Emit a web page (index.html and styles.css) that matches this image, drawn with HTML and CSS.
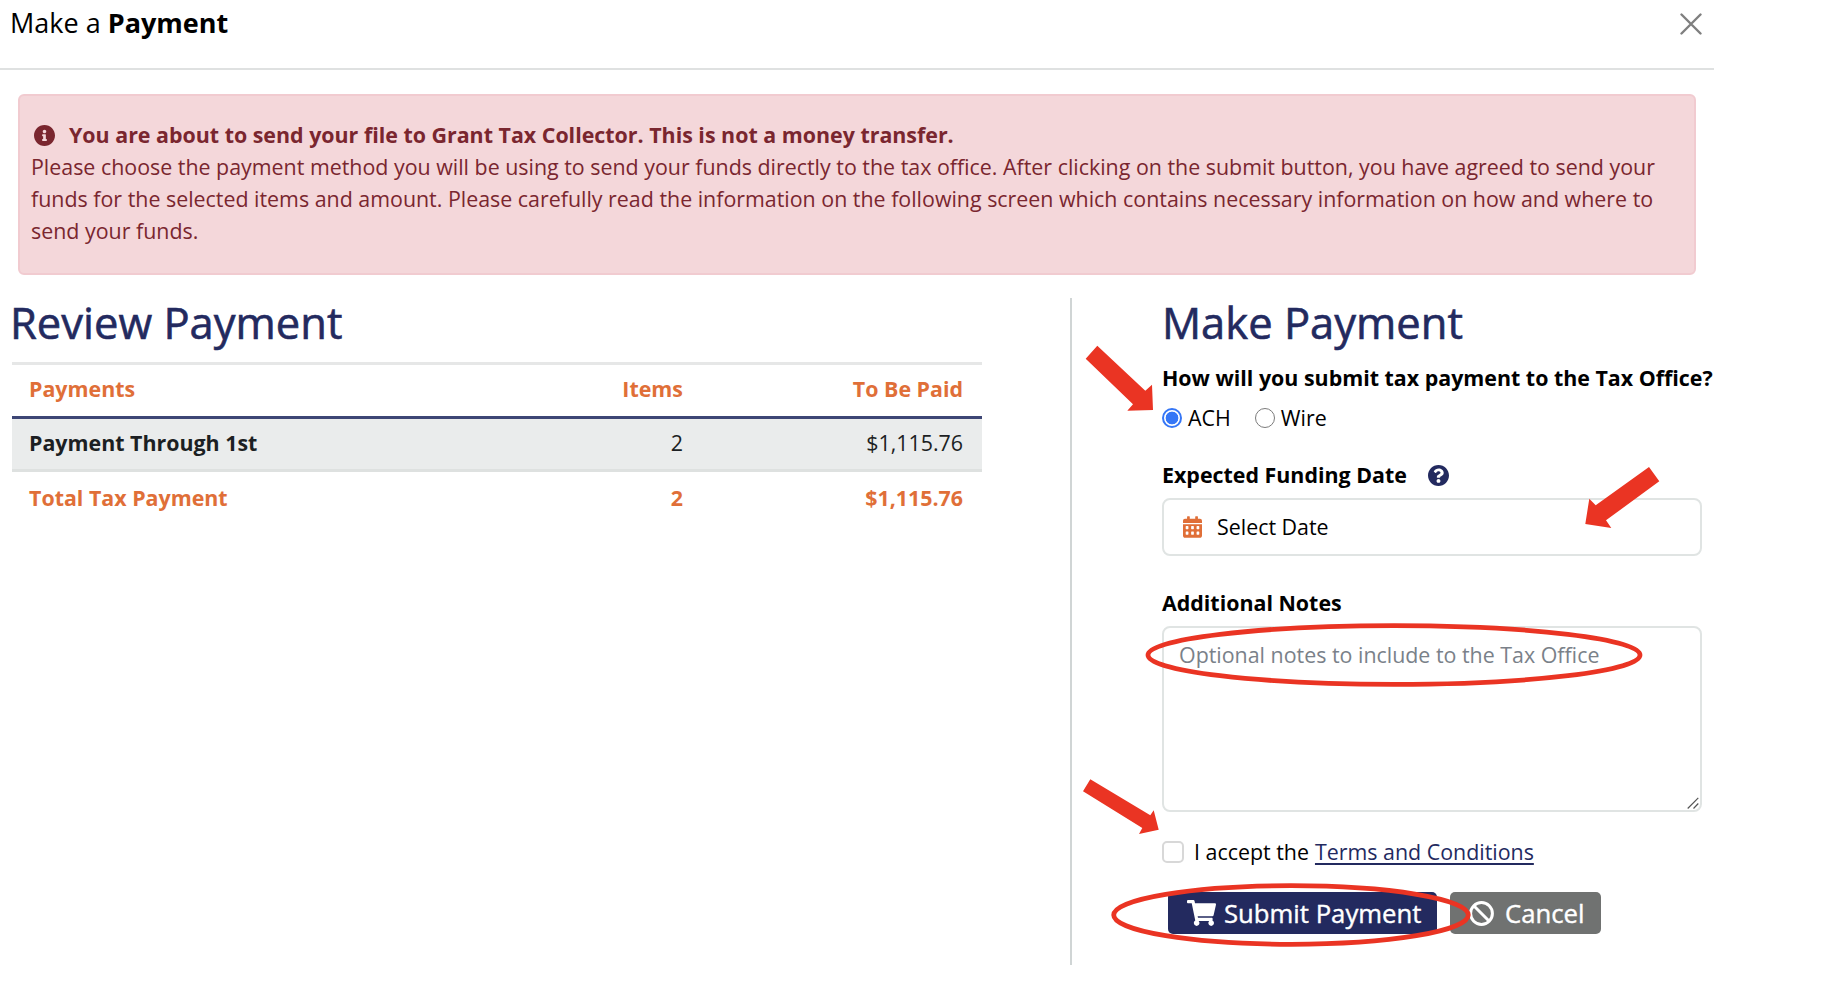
FILE: index.html
```
<!DOCTYPE html>
<html lang="en">
<head>
  <meta charset="UTF-8" />
  <meta name="viewport" content="width=device-width, initial-scale=1.0"/>
  <title>Make a Payment</title>
  <link rel="stylesheet" href="styles.css">
</head>
<body>
  <div class="modal">
    <header class="modal-header">
      <h5 class="modal-title"><span>Make a</span> <b>Payment</b></h5>
      <button class="close" type="button" aria-label="Close">
        <svg viewBox="0 0 22 22"><path d="M1.5 1.5l19 19M20.5 1.5l-19 19"/></svg>
      </button>
    </header>

    <div class="alert">
      <div class="alert-title">
        <svg class="icon" viewBox="8 8 496 496"><path d="M256 8C119.043 8 8 119.083 8 256c0 136.997 111.043 248 248 248s248-111.003 248-248C504 119.083 392.957 8 256 8zm0 110c23.196 0 42 18.804 42 42s-18.804 42-42 42-42-18.804-42-42 18.804-42 42-42zm56 254c0 6.627-5.373 12-12 12h-88c-6.627 0-12-5.373-12-12v-24c0-6.627 5.373-12 12-12h12v-64h-12c-6.627 0-12-5.373-12-12v-24c0-6.627 5.373-12 12-12h64c6.627 0 12 5.373 12 12v100h12c6.627 0 12 5.373 12 12v24z"/></svg>
        <b>You are about to send your file to Grant Tax Collector. This is not a money transfer.</b>
      </div>
      <p>Please choose the payment method you will be using to send your funds directly to the tax office. After clicking on the submit button, you have agreed to send your<br>
      funds for the selected items and amount. Please carefully read the information on the following screen which contains necessary information on how and where to<br>
      send your funds.</p>
    </div>

    <div class="row">
      <section class="review">
        <h2>Review Payment</h2>
        <table>
          <thead>
            <tr><th class="name">Payments</th><th class="items">Items</th><th>To Be Paid</th></tr>
          </thead>
          <tbody>
            <tr><th class="name">Payment Through 1st</th><td>2</td><td>$1,115.76</td></tr>
          </tbody>
          <tfoot>
            <tr><th class="name">Total Tax Payment</th><th>2</th><th>$1,115.76</th></tr>
          </tfoot>
        </table>
      </section>

      <section class="payment">
        <h2>Make Payment</h2>
        <form>
          <div class="label question">How will you submit tax payment to the Tax Office?</div>
          <div class="radios">
            <label><input type="radio" name="method" checked><span class="ach">ACH</span></label>
            <label><input type="radio" name="method"><span>Wire</span></label>
          </div>

          <div class="label date-label"><span>Expected Funding Date</span>
            <svg class="icon" viewBox="8 8 496 496"><path d="M504 256c0 136.997-111.043 248-248 248S8 392.997 8 256C8 119.083 119.043 8 256 8s248 111.083 248 248zM262.655 90c-54.497 0-89.255 22.957-116.549 63.758-3.536 5.286-2.353 12.415 2.715 16.258l34.699 26.31c5.205 3.947 12.621 3.008 16.665-2.122 17.864-22.658 30.113-35.797 57.303-35.797 20.429 0 45.698 13.148 45.698 32.958 0 14.976-12.363 22.667-32.534 33.976C247.128 238.528 216 254.941 216 296v4c0 6.627 5.373 12 12 12h56c6.627 0 12-5.373 12-12v-1.333c0-28.462 83.186-29.647 83.186-106.667 0-58.002-60.165-102-116.531-102zM256 338c-25.365 0-46 20.635-46 46 0 25.364 20.635 46 46 46s46-20.636 46-46c0-25.365-20.635-46-46-46z"/></svg>
          </div>
          <div class="date-input">
            <svg viewBox="0 0 448 512"><path fill-rule="evenodd" d="M0 192h448v272c0 26.500-21.500 48-48 48H48c-26.500 0-48-21.500-48-48zM64 244v52c0 6 5 12 12 12h40c7 0 12-6 12-12v-52c0-6-5-12-12-12H76c-7 0-12 6-12 12zM192 244v52c0 6 5 12 12 12h40c7 0 12-6 12-12v-52c0-6-5-12-12-12h-40c-7 0-12 6-12 12zM320 244v52c0 6 5 12 12 12h40c7 0 12-6 12-12v-52c0-6-5-12-12-12h-40c-7 0-12 6-12 12zM64 376v52c0 6 5 12 12 12h40c7 0 12-6 12-12v-52c0-6-5-12-12-12H76c-7 0-12 6-12 12zM192 376v52c0 6 5 12 12 12h40c7 0 12-6 12-12v-52c0-6-5-12-12-12h-40c-7 0-12 6-12 12zM320 376v52c0 6 5 12 12 12h40c7 0 12-6 12-12v-52c0-6-5-12-12-12h-40c-7 0-12 6-12 12z"/><path d="M0 160v-48c0-26.500 21.500-48 48-48h48V12c0-6.600 5.400-12 12-12h40c6.600 0 12 5.400 12 12v52h128V12c0-6.600 5.400-12 12-12h40c6.600 0 12 5.400 12 12v52h48c26.500 0 48 21.500 48 48v48z"/></svg>
            <span>Select Date</span>
          </div>

          <div class="label notes-label"><span>Additional Notes</span></div>
          <div class="notes">
            <span>Optional notes to include to the Tax Office</span>
            <svg class="grip" viewBox="0 0 12 12"><path d="M.7 11.500L11.300.8M6.500 11.500l4.800-5"/></svg>
          </div>

          <div class="terms">
            <input type="checkbox" id="accept">
            <label for="accept">I accept the</label> <a href="#">Terms and Conditions</a>
          </div>

          <div class="buttons">
            <button class="btn submit" type="button">
              <svg viewBox="0 0 576 512"><path d="M528.12 301.319l47.273-208C578.806 78.301 567.391 64 551.99 64H159.208l-9.166-44.81C147.758 8.021 137.93 0 126.529 0H24C10.745 0 0 10.745 0 24v16c0 13.255 10.745 24 24 24h69.883l70.248 343.435C147.325 417.1 136 435.222 136 456c0 30.928 25.072 56 56 56s56-25.072 56-56c0-15.674-6.447-29.835-16.824-40h209.647C430.447 426.165 424 440.326 424 456c0 30.928 25.072 56 56 56s56-25.072 56-56c0-22.172-12.888-41.332-31.579-50.405l5.517-24.276c3.413-15.018-8.002-29.319-23.403-29.319H218.117l-6.545-32h293.145c11.206 0 20.92-7.754 23.403-18.681z"/></svg>
              <span>Submit Payment</span>
            </button>
            <button class="btn cancel" type="button">
              <svg viewBox="0 0 25 25"><circle cx="12.500" cy="12.500" r="10.900"/><path d="M5 5l15 15"/></svg>
              <span>Cancel</span>
            </button>
          </div>
        </form>
      </section>
    </div>
  </div>

  <!-- arrows and circles drawn over the form -->
  <svg class="marks" viewBox="0 0 1822 996">
    <path d="M1085.700 358.700L1097.300 345.700 1145.300 390.700 1152 384.700 1153 410 1127.300 410.700 1133 404.300z"/>
    <path d="M1649 467L1659.300 481.300 1606 520.300 1611.300 528 1585.300 524 1589.300 498.700 1595.700 505.300z"/>
    <path d="M1083 791.300L1090.300 779.300 1150.300 815.300 1153.700 810.300 1158.700 829.700 1139 834 1142.300 828z"/>
    <ellipse cx="1394" cy="655" rx="246" ry="29.300"/>
    <ellipse cx="1291" cy="915" rx="177.300" ry="29.300"/>
  </svg>
</body>
</html>
```
FILE: styles.css
```
* {
  box-sizing: border-box;
}
body {
  margin: 0;
  background: #fff;
  color: #000;
  font-family: "Open Sans", "Noto Sans", sans-serif;
  font-size: 21.4px;
  line-height: 32px;
}
h2, h5, p {
  margin: 0;
}
svg {
  flex: none;
  fill: currentColor;
}
.modal {
  width: 1714px;
}
.modal-header {
  display: flex;
  justify-content: space-between;
  align-items: flex-start;
  height: 70px;
  padding: 7px 12px 0 10px;
  border-bottom: 2px solid #dfe1e1;
}
.modal-title {
  font-size: 27px;
  font-weight: 400;
}
.close {
  display: flex;
  padding: 0;
  margin-top: 6px;
  border: 0;
  background: none;
}
.close svg {
  width: 22px;
  height: 22px;
  stroke: #7f7f7f;
  stroke-width: 2.4;
  stroke-linecap: round;
}
.alert {
  height: 181px;
  margin: 24px 18px 0;
  padding: 23px 11px;
  background: #f4d7da;
  border: 2px solid #f1cbd0;
  border-radius: 6px;
  color: #7a262f;
  white-space: nowrap;
}
.alert-title {
  display: flex;
  align-items: center;
  gap: 14px;
  padding-left: 3px;
}
.icon {
  width: 21px;
  height: 21px;
}
.row {
  display: flex;
  margin-top: 23px;
  padding-left: 12px;
}
h2 {
  font-size: 43.5px;
  line-height: 50px;
  font-weight: 500;
  color: #232a5f;
  -webkit-text-stroke: .6px #232a5f;
}
.review {
  width: 1060px;
  height: 667px;
  padding-right: 89px;
  border-right: 2px solid #d0d5d5;
}
.review h2 {
  margin-left: -2px;
}
table {
  width: 970px;
  margin-top: 14px;
  table-layout: fixed;
  border-collapse: separate;
  border-spacing: 0;
}
th, td {
  padding: 0 19px 2px 17px;
  text-align: right;
}
.name {
  width: 490px;
  text-align: left;
}
.items {
  width: 200px;
}
thead th {
  height: 57px;
  padding-bottom: 4px;
  border-top: 3px solid #e6e7e7;
  border-bottom: 3px solid #3d4675;
}
thead th, tfoot th {
  color: #e06f38;
}
tbody th, tbody td {
  height: 53px;
  background: #eaecec;
  border-bottom: 3px solid #dee1e0;
  color: #1c1f23;
}
tfoot th {
  height: 56px;
  padding-bottom: 4px;
}
.payment {
  width: 642px;
  padding-left: 90px;
  white-space: nowrap;
}
.label {
  display: flex;
  align-items: center;
  font-weight: 700;
}
.question {
  margin-top: 14px;
}
.radios {
  display: flex;
  gap: 24px;
  height: 32px;
  margin-top: 8px;
}
.radios label {
  display: flex;
  gap: 6px;
}
.radios input {
  appearance: none;
  width: 20px;
  height: 20px;
  margin: 6px 0 0;
  border: 1.5px solid #7b7b7b;
  border-radius: 50%;
}
.radios input:checked {
  border: 2px solid #3576f6;
  background: radial-gradient(circle, #3576f6 6px, #fff 6.7px);
}
.date-label {
  gap: 21px;
  margin-top: 25px;
}
.date-label svg {
  color: #232a5f;
}
.date-input {
  display: flex;
  align-items: center;
  gap: 15px;
  width: 540px;
  height: 58px;
  margin-top: 7px;
  padding-left: 19px;
  border: 2px solid #e0e4e3;
  border-radius: 8px;
}
.date-input svg {
  width: 19px;
  height: 22px;
  color: #e06f38;
}
.notes-label {
  margin-top: 31px;
}
.notes {
  position: relative;
  width: 540px;
  height: 186px;
  margin-top: 7px;
  padding: 11px 15px;
  border: 2px solid #e0e4e3;
  border-radius: 8px;
  color: #7a8189;
}
.grip {
  position: absolute;
  right: 1px;
  bottom: 1px;
  width: 12px;
  height: 12px;
  stroke: #555;
  stroke-width: 1.2;
}
.terms {
  display: flex;
  align-items: center;
  margin-top: 24px;
}
.terms input {
  appearance: none;
  width: 22px;
  height: 22px;
  margin: 0 10px 0 0;
  border: 2px solid #d8d8d8;
  border-radius: 5px;
}
.terms a {
  margin-left: 6px;
  color: #232a5f;
  text-decoration-thickness: 1.5px;
  text-underline-offset: 3px;
}
.buttons {
  display: flex;
  gap: 13px;
  margin: 24px 0 0 6px;
}
.btn {
  display: flex;
  align-items: center;
  height: 42px;
  padding: 0 0 0 19px;
  border: 0;
  border-radius: 5px;
  color: #fff;
  font-family: inherit;
  font-size: 25.7px;
}
.btn span {
  -webkit-text-stroke: .4px #fff;
}
.submit {
  width: 269px;
  gap: 8px;
  background: #232a5f;
}
.submit svg {
  width: 29px;
  height: 26px;
}
.cancel {
  width: 151px;
  gap: 11px;
  background: #707271;
}
.cancel svg {
  width: 25px;
  height: 25px;
  fill: none;
  stroke: #fff;
  stroke-width: 3;
}
.marks {
  position: absolute;
  top: 0;
  left: 0;
  width: 1822px;
  height: 996px;
  fill: #ea3423;
  pointer-events: none;
}
.marks ellipse {
  fill: none;
  stroke: #ea3423;
  stroke-width: 4.8;
}
```
